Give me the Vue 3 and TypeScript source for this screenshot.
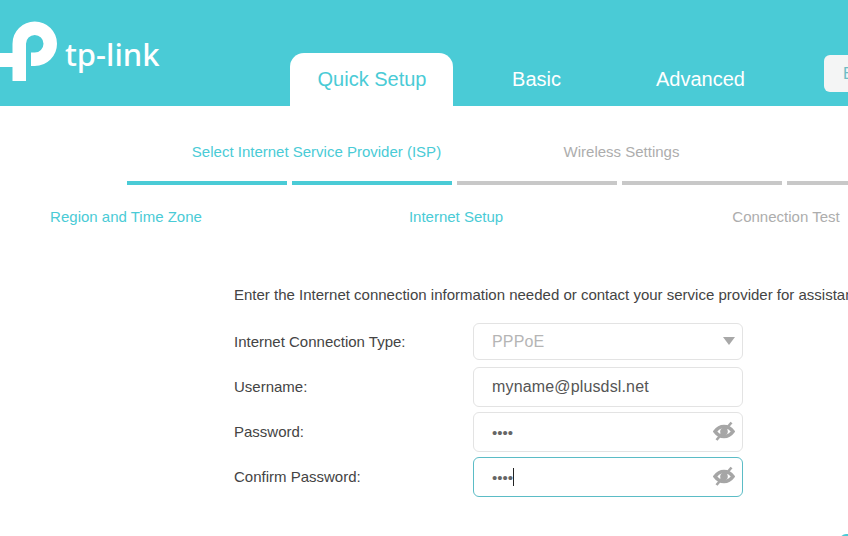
<script setup lang="ts">
const tabs = ['Quick Setup', 'Basic', 'Advanced']
const topSteps = [
  { label: 'Select Internet Service Provider (ISP)', active: true },
  { label: 'Wireless Settings', active: false },
]
const bottomSteps = [
  { label: 'Region and Time Zone', active: true },
  { label: 'Internet Setup', active: true },
  { label: 'Connection Test', active: false },
]
const bars = [true, true, false, false, false]
</script>

<template>
  <div class="page">
    <header class="header">
      <div class="brand">
        <svg class="mark" width="60" height="70" viewBox="0 0 60 70" aria-hidden="true">
          <g transform="translate(0 -15)">
            <path d="M19.25 81V43.75A15.5 15.5 0 1 1 34.75 59.25H31" fill="none" stroke="#fff" stroke-width="13.5" />
            <rect x="0" y="53" width="26" height="14" fill="#fff" />
          </g>
        </svg>
        <span class="wordmark">tp-link</span>
      </div>
      <nav class="tabs">
        <a v-for="(tab, i) in tabs" :key="tab" class="tab" :class="{ current: i === 0 }">{{ tab }}</a>
      </nav>
      <button class="lang">English</button>
    </header>

    <section class="stepper">
      <div class="labels top">
        <span v-for="s in topSteps" :key="s.label" class="step" :class="{ active: s.active }">{{ s.label }}</span>
      </div>
      <div class="bars">
        <i v-for="(on, i) in bars" :key="i" class="bar" :class="{ on }"></i>
      </div>
      <div class="labels bottom">
        <span v-for="s in bottomSteps" :key="s.label" class="step" :class="{ active: s.active }">{{ s.label }}</span>
      </div>
    </section>

    <section class="form">
      <p class="intro">Enter the Internet connection information needed or contact your service provider for assistance.</p>
      <div class="row short">
        <label>Internet Connection Type:</label>
        <div class="field disabled">PPPoE<i class="arrow"></i></div>
      </div>
      <div class="row">
        <label>Username:</label>
        <div class="field">myname@plusdsl.net</div>
      </div>
      <div class="row">
        <label>Password:</label>
        <div class="field"><span class="dots">••••</span>
          <svg class="eye" width="22" height="20" viewBox="0 0 22 20" aria-hidden="true">
            <path d="M2 10.500C4.500 7 7.500 5.500 11 5.500s6.500 1.500 9 5C17.500 14 14.500 15.500 11 15.500S4.500 14 2 10.500Z" fill="none" stroke="#a6a6a6" stroke-width="3.600" />
            <circle cx="11" cy="10.500" r="3.800" fill="#a6a6a6" />
            <path d="M3.500 19L18.500 1.500" stroke="#a6a6a6" stroke-width="2.600" />
          </svg>
        </div>
      </div>
      <div class="row">
        <label>Confirm Password:</label>
        <div class="field focused"><span class="dots">••••</span><i class="caret"></i>
          <svg class="eye" width="22" height="20" viewBox="0 0 22 20" aria-hidden="true">
            <path d="M2 10.500C4.500 7 7.500 5.500 11 5.500s6.500 1.500 9 5C17.500 14 14.500 15.500 11 15.500S4.500 14 2 10.500Z" fill="none" stroke="#a6a6a6" stroke-width="3.600" />
            <circle cx="11" cy="10.500" r="3.800" fill="#a6a6a6" />
            <path d="M3.500 19L18.500 1.500" stroke="#a6a6a6" stroke-width="2.600" />
          </svg>
        </div>
      </div>
      <div class="actions"><button class="next" aria-label="Next"></button></div>
    </section>
  </div>
</template>

<style>
html, body { margin: 0; background: #fff; }
</style>

<style scoped>
.page {
  width: 848px;
  height: 536px;
  overflow: hidden;
  background: #fff;
  font-family: "Liberation Sans", Arial, sans-serif;
  font-size: 15px;
  color: #444;
}
.header {
  height: 106px;
  display: flex;
  background: #4acbd6;
}
.brand {
  width: 290px;
  flex: none;
  display: flex;
  align-items: flex-start;
  padding-top: 15px;
  box-sizing: border-box;
}
.mark { flex: none; }
.wordmark {
  margin: 17px 0 0 5px;
  font-family: "Noto Sans", sans-serif;
  font-size: 31px;
  font-weight: 500;
  line-height: 44px;
  color: #fff;
}
.tabs {
  display: flex;
  align-self: flex-end;
  flex: none;
  width: 534px;
}
.tab {
  width: 164px;
  height: 53px;
  line-height: 53px;
  text-align: center;
  text-indent: 1px;
  font-size: 20px;
  color: #fff;
  box-sizing: border-box;
}
.tab.current {
  width: 163px;
  margin-right: 1px;
  background: #fff;
  color: #4acbd6;
  border-radius: 14px 14px 0 0;
}
.lang {
  flex: none;
  width: 80px;
  height: 37px;
  margin-top: 55px;
  padding: 0 0 0 19px;
  border: 0;
  border-radius: 6px;
  background: #f4f5f5;
  color: #6fbcc4;
  font: 16px "Liberation Sans", Arial, sans-serif;
  text-align: left;
}
.stepper { overflow: hidden; }
.labels { display: flex; line-height: 20px; color: #adadad; white-space: nowrap; }
.labels.top { margin-top: 36px; padding-left: 164px; }
.labels.top .step { width: 305px; flex: none; text-align: center; }
.labels.bottom { margin: 22px 0 0 -39px; }
.labels.bottom .step { width: 330px; flex: none; text-align: center; }
.step.active { color: #4acbd6; }
.bars {
  display: flex;
  gap: 5px;
  margin-top: 19px;
  padding-left: 127px;
}
.bar {
  flex: none;
  width: 160px;
  height: 4px;
  background: #c8c8c8;
}
.bar.on { background: #4acbd6; }
.form {
  padding-left: 234px;
  margin-top: 58px;
}
.intro {
  margin: 0 0 18px;
  line-height: 20px;
  white-space: nowrap;
  color: #444;
}
.row {
  display: flex;
  align-items: center;
  height: 40px;
  margin-bottom: 5px;
}
.row.short { height: 37px; margin-bottom: 7px; }
.row label { width: 239px; flex: none; padding-bottom: 2px; }
.row.short label { padding-bottom: 0; }
.field {
  position: relative;
  width: 270px;
  height: 100%;
  box-sizing: border-box;
  display: flex;
  align-items: center;
  padding-left: 18px;
  border: 1px solid #e3e3e3;
  border-radius: 6px;
  font-size: 16px;
  letter-spacing: 0.15px;
  color: #555;
  background: #fff;
}
.field.disabled { color: #b5b5b5; }
.field.focused { border-color: #5bbcc6; }
.dots { font-size: 15px; letter-spacing: 0; color: #666; }
.caret {
  width: 1px;
  height: 18px;
  background: #222;
}
.arrow {
  position: absolute;
  right: 7px;
  top: 13px;
  border-style: solid;
  border-width: 8px 6px 0;
  border-color: #a8a8a8 transparent transparent;
}
.eye {
  position: absolute;
  right: 7px;
  top: 8px;
}
.actions {
  display: flex;
  margin-top: 37px;
}
.next {
  margin-left: 606px;
  flex: none;
  width: 120px;
  height: 36px;
  border: 0;
  border-radius: 6px;
  background: #4acbd6;
}
</style>
